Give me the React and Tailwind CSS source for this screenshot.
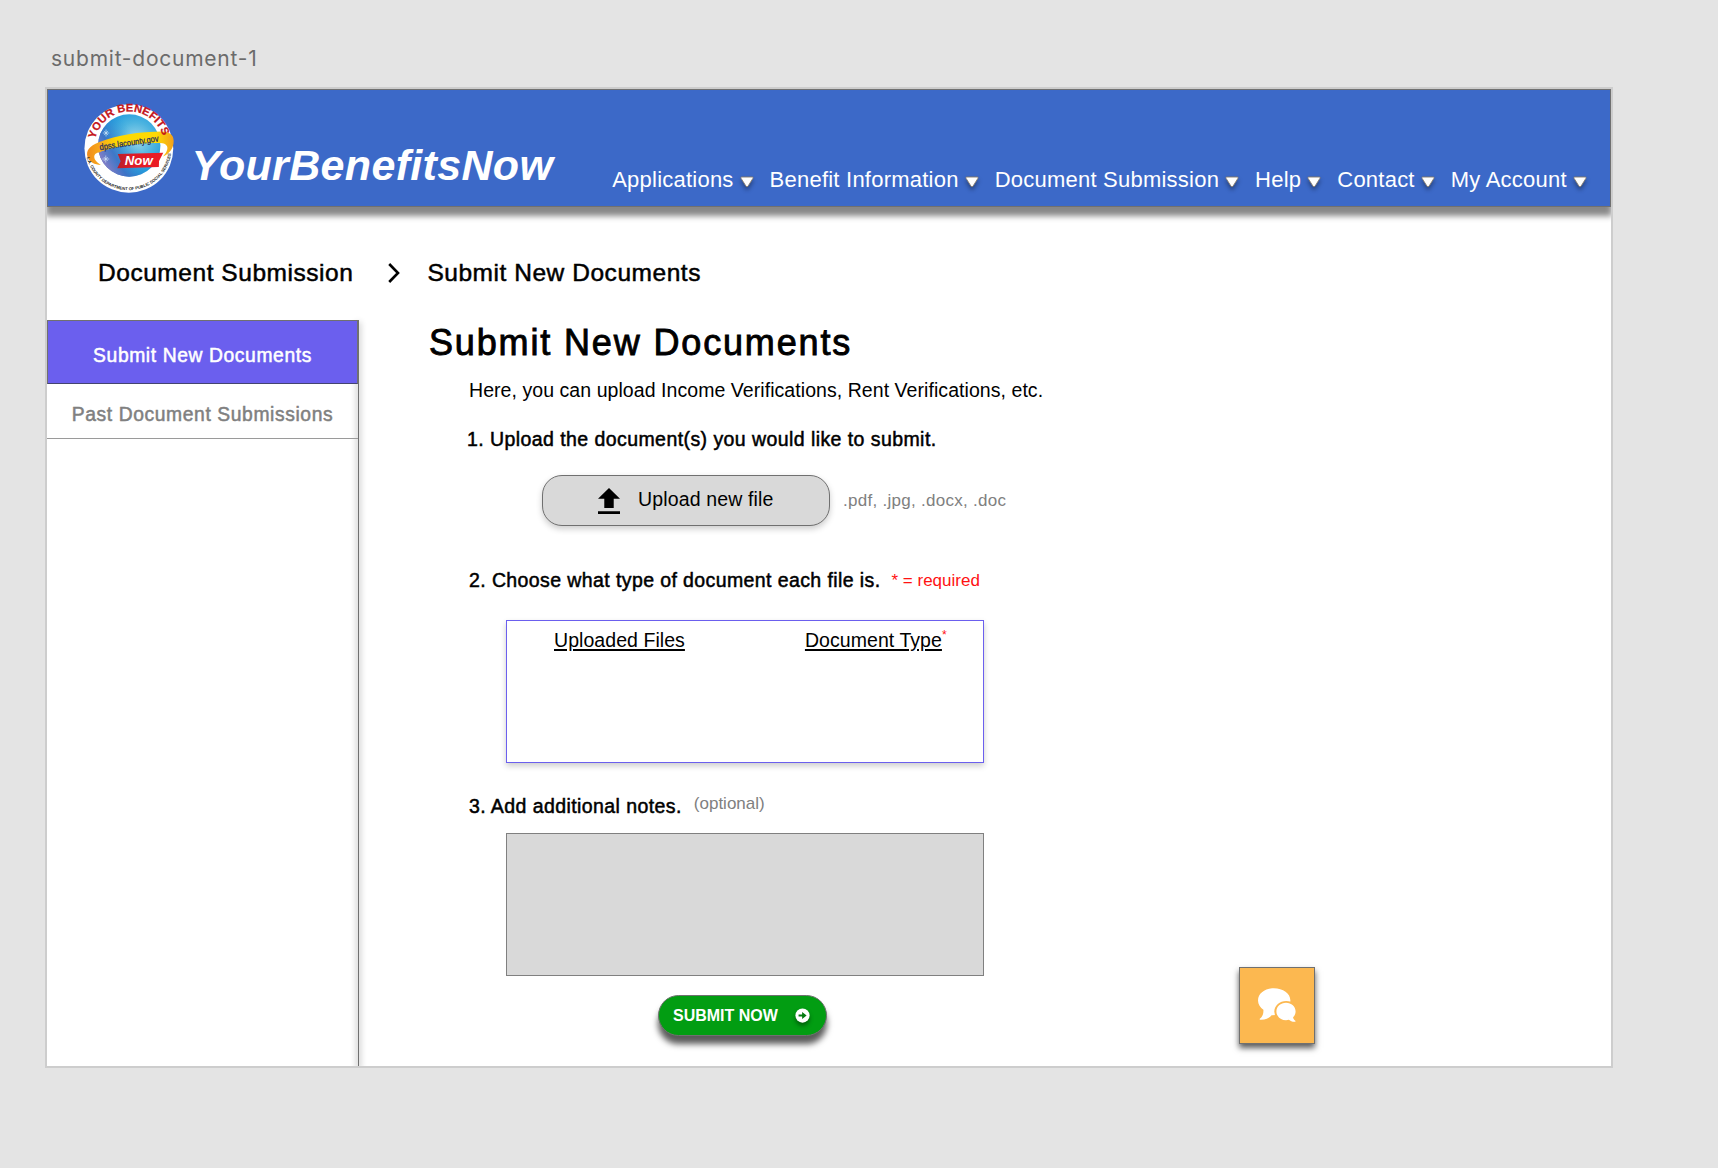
const NAV_ITEMS = [
  "Applications",
  "Benefit Information",
  "Document Submission",
  "Help",
  "Contact",
  "My Account",
];

const medium = "[-webkit-text-stroke:0.5px_currentColor]";

function Logo() {
  return (
    <svg viewBox="9 8.5 89.5 89" className="h-[89px] w-[90px] shrink-0 overflow-visible" aria-label="Your Benefits Now">
      <defs>
        <radialGradient id="globe" cx="0.6" cy="0.42" r="0.65">
          <stop offset="0" stopColor="#9fd8ea" />
          <stop offset="0.45" stopColor="#4db4e0" />
          <stop offset="0.8" stopColor="#1f9add" />
          <stop offset="1" stopColor="#3a66b8" />
        </radialGradient>
        <linearGradient id="shade" x1="0" y1="0.75" x2="0.6" y2="0.4">
          <stop offset="0" stopColor="#9a84c8" />
          <stop offset="0.4" stopColor="#3f6fc4" stopOpacity="0.85" />
          <stop offset="1" stopColor="#2f9ddb" stopOpacity="0" />
        </linearGradient>
        <linearGradient id="ribbon" x1="0" x2="1">
          <stop offset="0" stopColor="#f08a1c" />
          <stop offset="0.14" stopColor="#f7a81c" />
          <stop offset="0.35" stopColor="#fdd900" />
          <stop offset="0.8" stopColor="#fdd905" />
          <stop offset="1" stopColor="#f3a01b" />
        </linearGradient>
        <linearGradient id="flag" x1="0" x2="1">
          <stop offset="0" stopColor="#b81f2b" />
          <stop offset="0.35" stopColor="#e01b26" />
          <stop offset="1" stopColor="#ed1c24" />
        </linearGradient>
        <path id="arcTop" d="M20 43.4 A35 35 0 0 1 88 42" />
        <path id="arcBottom" d="M11.6 62 A43 43 0 0 0 96 57" />
      </defs>
      <ellipse cx="53.6" cy="53" rx="44.4" ry="44.2" fill="#fff" />
      <circle cx="54" cy="50" r="31.2" fill="url(#globe)" />
      <circle cx="54" cy="50" r="31.2" fill="url(#shade)" />
      <path d="M30.8 34 V41 M27.5 37.5 H34 M28.8 35.4 L32.8 39.6 M32.8 35.4 L28.8 39.6 M30.5 60 V67 M27 63.5 H34 M28.5 61.5 L32.5 65.5 M32.5 61.5 L28.5 65.5" stroke="#dff2ff" strokeWidth="0.6" />
      <path d="M23.6 46.7 C14 50.5 10.5 55 12.3 61.5 C14 67 19.5 69 25.6 69.4 C20 66.5 17.4 61.5 20 58.6 C21 57.4 23 57 24.6 56.7 C36 52 62 47 85.4 47.6 C95 48.4 93 55.6 87.9 61 C94.6 57.5 98.4 53 98.4 45.5 C98.4 39 94 36.2 87 36 C64 36.2 42 39.6 23.6 46.7 Z" fill="url(#ribbon)" />
      <path d="M42.5 58.6 L88 57.2 L83.8 65.6 L83.6 71.6 L42 72.8 L45.4 65.7 Z" fill="url(#flag)" />
      <text x="49.5" y="69.6" textLength="28" lengthAdjust="spacingAndGlyphs" className="fill-white font-['Liberation_Sans'] text-[12.5px] font-bold italic">Now</text>
      <text x="24.8" y="54.8" transform="rotate(-8.6 24.8 54.8)" textLength="59.5" lengthAdjust="spacingAndGlyphs" className="fill-[#1d2b5e] font-['Liberation_Sans'] text-[9px] [stroke:#1d2b5e] [stroke-width:0.25px]">dpss.lacounty.gov</text>
      <text className="fill-[#c4161c] font-['Liberation_Sans'] text-[11px] font-bold [stroke:#c4161c] [stroke-width:0.25px]">
        <textPath href="#arcTop" textLength="91" lengthAdjust="spacingAndGlyphs">YOUR BENEFITS</textPath>
      </text>
      <text className="fill-[#222] font-['Liberation_Sans'] text-[4.2px] font-bold">
        <textPath href="#arcBottom" textLength="118" lengthAdjust="spacingAndGlyphs">L.A. COUNTY DEPARTMENT OF PUBLIC SOCIAL SERVICES</textPath>
      </text>
    </svg>
  );
}

function Caret() {
  return (
    <svg viewBox="0 0 14 12" className="mt-[10px] h-3 w-3.5 overflow-visible drop-shadow-[0_3px_2px_rgba(0,0,0,0.35)]">
      <path d="M1.6 1 H12.4 Q13.6 1.2 12.9 2.4 L8 10.2 Q7 11.4 6 10.2 L1.1 2.4 Q0.4 1.2 1.6 1 Z" fill="#fff" stroke="#85796a" strokeWidth="0.9" />
    </svg>
  );
}

function Header() {
  return (
    <header className="relative z-10 flex h-[118px] shrink-0 items-start border border-[#707070] bg-[#3c69c8] text-white shadow-[0_8px_6px_1px_rgba(0,0,0,0.47)]">
      <div className="mt-[14px] ml-[36px]">
        <Logo />
      </div>
      <h1 className="mt-[51px] ml-[17.5px] text-[43px] leading-[48px] font-bold tracking-[0.33px] whitespace-nowrap italic">
        YourBenefitsNow
      </h1>
      <nav className="mt-[76px] ml-[59px] flex gap-4 text-[22px] leading-[28px] tracking-[0.23px] whitespace-nowrap">
        {NAV_ITEMS.map((item) => (
          <a key={item} className="flex gap-[6px]">
            {item}
            <Caret />
          </a>
        ))}
      </nav>
    </header>
  );
}

function Breadcrumb() {
  return (
    <div className={`mt-[50px] flex items-center pl-[51px] text-[24.5px] leading-8 tracking-[0.54px] whitespace-nowrap ${medium}`}>
      <span>Document Submission</span>
      <svg viewBox="0 0 12 20" className="ml-[35px] h-5 w-3" fill="none" stroke="#000" strokeWidth="2.6">
        <path d="M1.2 1 L10 10 L1.2 19" />
      </svg>
      <span className="ml-[27px]">Submit New Documents</span>
    </div>
  );
}

function Sidebar() {
  return (
    <aside className="flex shrink-0">
      <div className={`relative z-10 flex w-[311px] flex-col text-center text-[19.3px] leading-6 tracking-[0.6px] ${medium}`}>
        <a className="h-[64px] border border-[#707070] border-b-[#444470] bg-[#6b5fee] pt-[23px] text-white">
          Submit New Documents
        </a>
        <a className="h-[55px] border-b border-[#9a9a9a] pt-[19px] text-[#808080]">
          Past Document Submissions
        </a>
      </div>
      <div className="w-px bg-[#707070] shadow-[0_3px_6px_1px_rgba(0,0,0,0.3)]" />
    </aside>
  );
}

function Content() {
  return (
    <main className="flex flex-col items-start whitespace-nowrap">
      <h2 className="mt-[3px] ml-[70px] text-[36px] leading-10 tracking-[1.85px] [-webkit-text-stroke:0.9px_currentColor]">
        Submit New Documents
      </h2>
      <p className="mt-[15px] ml-[110px] text-[19.5px] leading-6 tracking-[0.06px]">
        Here, you can upload Income Verifications, Rent Verifications, etc.
      </p>
      <h3 className={`mt-[25px] ml-[108px] text-[19.5px] leading-6 tracking-[0.43px] ${medium}`}>
        1. Upload the document(s) you would like to submit.
      </h3>
      <div className="mt-6 ml-[183px] flex items-center">
        <button className="flex h-[51px] w-[288px] items-center rounded-[20px] border border-[#707070] bg-[#d9d9d9] pl-[55px] text-[19.5px] tracking-[0.15px] shadow-[0_3px_6px_rgba(0,0,0,0.2)]">
          <svg viewBox="5 3 14 17" className="mt-px h-[26px] w-[22px]" preserveAspectRatio="none">
            <path d="M9 16h6v-6h4l-7-7-7 7h4zm-4 2.2h14v1.8H5z" />
          </svg>
          <span className="mb-[3px] ml-[18px] leading-6">Upload new file</span>
        </button>
        <span className="ml-[13px] text-[17px] leading-6 tracking-[0.28px] text-[#808080]">
          .pdf, .jpg, .docx, .doc
        </span>
      </div>
      <div className="mt-[42px] ml-[110px] flex leading-6">
        <h3 className={`text-[19.5px] tracking-[0.4px] ${medium}`}>
          2. Choose what type of document each file is.
        </h3>
        <span className="mt-px -mb-px ml-[11px] text-[17px] text-[#ff1212]">* = required</span>
      </div>
      <div className="mt-[28px] ml-[147px] flex h-[143px] w-[478px] border border-[#6b5fee] bg-white pt-[7px] text-[19.5px] leading-6 tracking-[0.06px] shadow-[0_3px_6px_rgba(0,0,0,0.2)]">
        <span className="ml-[47px] underline decoration-[1.5px] underline-offset-[2px]">Uploaded Files</span>
        <span className="ml-[120px] underline decoration-[1.5px] underline-offset-[2px]">Document Type</span>
        <span className="-mt-[5px] text-[12px] leading-6 text-[#ff1212]">*</span>
      </div>
      <div className="mt-[31px] ml-[110px] flex leading-6">
        <h3 className={`text-[19.5px] tracking-[0.42px] ${medium}`}>3. Add additional notes.</h3>
        <span className="-mt-[2px] ml-[12px] text-[17px] text-[#808080]">(optional)</span>
      </div>
      <div className="mt-[15px] ml-[147px] h-[143px] w-[478px] border border-[#808080] bg-[#d9d9d9]" />
      <button className="mt-[19px] ml-[299px] flex h-[41px] w-[169px] items-center rounded-full border border-[#707070] bg-[#029d12] pl-[14px] text-[16px] font-bold text-white shadow-[0_8px_6px_rgba(0,0,0,0.65)]">
        SUBMIT NOW
        <svg viewBox="0 0 16 16" className="ml-[17px] h-[15px] w-[15px] overflow-visible drop-shadow-[0_3px_2px_rgba(0,0,0,0.4)]">
          <circle cx="8" cy="8" r="7.6" fill="#fff" />
          <path d="M3.8 6.9 H7.6 V4.2 L12.4 8 L7.6 11.8 V9.1 H3.8 Z" fill="#047a10" />
        </svg>
      </button>
    </main>
  );
}

function ChatButton() {
  return (
    <button className="absolute top-[878px] left-[1192px] flex h-[77px] w-[76px] items-center justify-center border border-[#707070] bg-[#fcb850] pr-[2px] shadow-[0_4px_6px_rgba(0,0,0,0.65)]">
      <svg viewBox="6 7 41 37" className="h-[37px] w-[41px]">
        <path d="M23.8 8.3 C15 8.3 8 13.6 8 20.4 C8 24.3 10.3 27.6 13.4 29.8 C13.6 34 12.6 36.6 9.8 38.8 C9.5 39.4 9.8 39.8 10.4 39.8 C15.6 40 19.6 37.8 21.6 35.2 C31.8 35.4 40.4 29.6 40.4 20.4 C40.4 13.6 33 8.3 23.8 8.3 Z" fill="#fff" />
        <ellipse cx="36.2" cy="31.6" rx="11.9" ry="10.7" fill="#fcb850" />
        <path d="M36 22.8 C30.6 22.8 26.4 26.7 26.4 31.6 C26.4 36.5 30.6 40.2 36 40.2 C37 40.2 38 40.1 38.9 39.8 C40.5 41.2 42.6 42 45 41.8 C45.7 41.7 45.8 41.2 45.3 40.8 C43.9 39.7 43.2 38.4 43.1 37.2 C44.8 35.7 45.6 33.8 45.6 31.6 C45.6 26.7 41.4 22.8 36 22.8 Z" fill="#fff" />
      </svg>
    </button>
  );
}

export default function App() {
  return (
    <div className="h-[1168px] w-[1718px] overflow-hidden bg-[#e4e4e4] font-['Liberation_Sans',Arial,sans-serif] text-black">
      <div className="h-[87px] pt-[45px] pl-[51px] font-['Inter',sans-serif] text-[21px] leading-7 tracking-[0.76px] text-[#6b6b6b]">
        submit-document-1
      </div>
      <div className="ml-[45px] h-[981px] w-[1568px] border-2 border-[#cdcdcd]">
        <div className="relative flex h-full flex-col overflow-hidden bg-white">
          <Header />
          <Breadcrumb />
          <div className="mt-[31px] flex flex-1">
            <Sidebar />
            <Content />
          </div>
          <ChatButton />
        </div>
      </div>
    </div>
  );
}
